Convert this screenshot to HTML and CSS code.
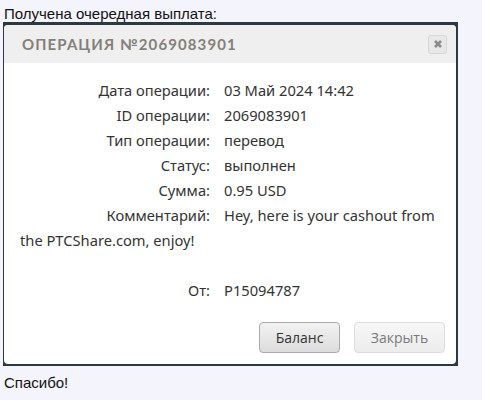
FILE: index.html
```html
<!DOCTYPE html>
<html lang="ru">
<head>
<meta charset="utf-8">
<link rel="stylesheet" href="styles.css">
</head>
<body>
<p class="intro">Получена очередная выплата:</p>
<div class="frame">
  <div class="dialog">
    <div class="dlg-head">
      <span class="dlg-title">ОПЕРАЦИЯ №2069083901</span>
      <button class="dlg-close" aria-label="close">
        <svg width="10" height="10" viewBox="0 0 10 10"><path d="M2 2 L8 8 M8 2 L2 8" stroke="#8a8a8a" stroke-width="2.6" stroke-linecap="butt"/></svg>
      </button>
    </div>
    <div class="dlg-body">
      <div class="row"><span class="lbl">Дата операции:</span>03 Май 2024 14:42</div>
      <div class="row"><span class="lbl">ID операции:</span>2069083901</div>
      <div class="row"><span class="lbl">Тип операции:</span>перевод</div>
      <div class="row"><span class="lbl">Статус:</span>выполнен</div>
      <div class="row"><span class="lbl">Сумма:</span>0.95 USD</div>
      <div class="row"><span class="lbl">Комментарий:</span><span>Hey, here is your cashout from</span> <span>the PTCShare.com, enjoy!</span></div>
      <div class="row empty"></div>
      <div class="row"><span class="lbl">От:</span>P15094787</div>
    </div>
    <div class="dlg-buttons">
      <button class="btn btn-main">Баланс</button>
      <button class="btn btn-dim">Закрыть</button>
    </div>
  </div>
</div>
<p class="outro">Спасибо!</p>
</body>
</html>
```
FILE: styles.css
```css
html, body {
  margin: 0;
  padding: 0;
  background: #f4f4fd;
}
body {
  font-family: "Liberation Sans", Arial, sans-serif;
  font-size: 15px;
  color: #111;
}
.intro {
  margin: 0;
  padding: 6px 0 0 4px;
  line-height: 16px;
}
.outro {
  margin: 0;
  padding: 9px 0 0 4px;
  line-height: 16px;
}
.frame {
  margin: 0 0 0 3px;
  width: 452px;
  background: #2b3942;
  padding: 3px 2px 2px 1px;
}
.dialog {
  background: #fff;
  border-radius: 4px;
  overflow: hidden;
}
.dlg-head {
  height: 38px;
  background: #efefef;
  display: flex;
  align-items: center;
  justify-content: space-between;
  padding: 0 9px 0 18px;
}
.dlg-title {
  font-family: "Lato", sans-serif;
  font-weight: 700;
  font-size: 15px;
  letter-spacing: 1.1px;
  color: #857f79;
}
.dlg-close {
  width: 19px;
  height: 19px;
  padding: 0;
  border: 1px solid #d6d6d6;
  border-radius: 3px;
  background: #e8e8e8;
  display: flex;
  align-items: center;
  justify-content: center;
}
.dlg-body {
  padding: 15px 16px 0 16px;
  font-family: "Noto Sans", sans-serif;
  font-size: 14.7px;
  color: #333;
  line-height: 25px;
}
.row.empty { height: 25px; }
.lbl {
  display: inline-block;
  width: 190px;
  text-align: right;
  margin-right: 14px;
  vertical-align: top;
}
.dlg-buttons {
  display: flex;
  justify-content: flex-end;
  gap: 14px;
  padding: 19px 11px 11px;
}
.btn {
  font-family: "Open Sans", sans-serif;
  font-size: 14px;
  height: 31px;
  border-radius: 4px;
  padding: 0 12px;
}
.btn-main {
  width: 81px;
  color: #333;
  border: 1px solid #a9a9a9;
  background: linear-gradient(#f2f2f2, #dcdcdc);
}
.btn-dim {
  width: 91px;
  color: #7a7a7a;
  border: 1px solid #dcdcdc;
  background: linear-gradient(#f7f7f7, #ececec);
}
```
